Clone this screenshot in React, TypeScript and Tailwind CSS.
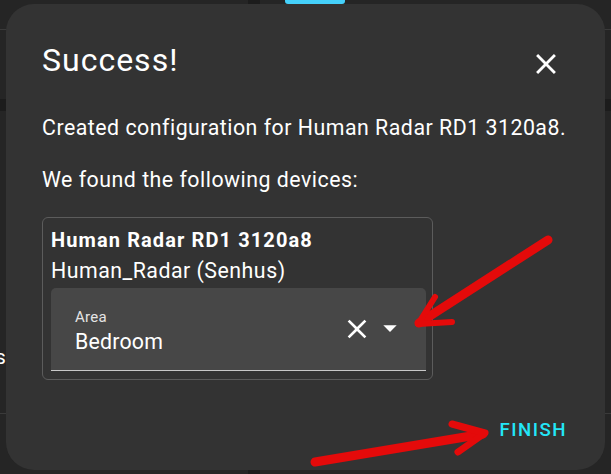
import React from "react";

function CloseIcon({ className }: { className?: string }) {
  return (
    <svg viewBox="0 0 24 24" className={className} fill="currentColor">
      <path d="M19,6.41L17.59,5L12,10.59L6.41,5L5,6.41L10.59,12L5,17.59L6.41,19L12,13.41L17.59,19L19,17.59L13.41,12L19,6.41Z" />
    </svg>
  );
}

function MenuDown({ className }: { className?: string }) {
  return (
    <svg viewBox="0 0 24 24" className={className} fill="currentColor">
      <path d="M7,10L12,15L17,10H7Z" />
    </svg>
  );
}

export default function App() {
  return (
    <div
      className="relative w-[611px] h-[474px] overflow-hidden bg-[#252525] text-white"
      style={{ fontFamily: "Roboto, 'Noto Sans', sans-serif" }}
    >
      {/* page behind the modal */}
      <div className="absolute left-0 right-0 top-[29px] h-px bg-[#3a3a3a]" />
      <div className="absolute left-0 right-0 top-[99px] h-[12px] bg-[#1c1c1c]" />
      <div className="absolute left-0 right-0 top-[413px] h-px bg-[#3a3a3a]" />
      <div className="absolute left-[248px] top-0 bottom-0 w-[12px] bg-[#1c1c1c]" />
      <div className="absolute left-[285px] top-0 w-[60px] h-[4px] rounded-b-[3px] bg-[#45d1fb]" />
      <span className="absolute left-[-5px] top-[343px] text-[21px] leading-[28px] text-white">s</span>

      {/* dialog */}
      <div className="relative ml-[6px] mt-[4px] w-[599px] h-[466px] rounded-[28px] bg-[#333333] flex flex-col pl-[36px] pt-[36px]">
        <div className="flex items-start justify-between pr-[42px]">
          <h2 className="text-[32px] leading-[40px] font-normal tracking-[1px] text-white">Success!</h2>
          <CloseIcon className="w-[34px] h-[34px] mt-[7px] text-white" />
        </div>

        <p className="mt-[33px] text-[21.33px] leading-[28px] tracking-[0.5px] text-white">
          Created configuration for Human Radar RD1 3120a8.
        </p>
        <p className="mt-[24px] text-[21.33px] leading-[28px] tracking-[0.5px] text-white">
          We found the following devices:
        </p>

        <div className="mt-[23px] w-[391px] h-[163px] rounded-[6px] border border-[#5c5c5c] flex flex-col pl-[8px] pr-[6px] pt-[10px]">
          <div className="text-[20px] leading-[24px] font-bold tracking-[1.1px] text-white">Human Radar RD1 3120a8</div>
          <div className="mt-[5px] text-[21.33px] leading-[28px] tracking-[0.5px] text-white">Human_Radar (Senhus)</div>
          <div className="mt-[3px] h-[83px] rounded-t-[5px] bg-[#474747] border-b border-[#c8c8c8] flex items-center pl-[24px] pr-[20px]">
            <div className="flex-1 flex flex-col pt-[4px]">
              <span className="text-[15px] leading-[18px] tracking-[0.3px] text-[#e4e4e4]">Area</span>
              <span className="mt-[3px] text-[21.33px] leading-[26px] tracking-[0.2px] text-white">Bedroom</span>
            </div>
            <CloseIcon className="w-[32px] h-[32px] text-white" />
            <MenuDown className="ml-[1px] w-[32px] h-[32px] -mt-[2px] text-white" />
          </div>
        </div>

        <div className="mt-auto flex justify-end pr-[38px] pb-[28px]">
          <span className="text-[18.67px] leading-[24px] font-medium tracking-[1.5px] text-[#23e6f8]">FINISH</span>
        </div>
      </div>

      {/* red annotation arrows */}
      <svg
        className="absolute inset-0 pointer-events-none"
        width="611"
        height="474"
        viewBox="0 0 611 474"
        fill="none"
        stroke="#e40a0a"
        strokeLinecap="round"
        strokeLinejoin="round"
      >
        <path d="M548 240 L419 323" strokeWidth="9" />
        <path d="M435 297 L418 324 L452 322" strokeWidth="6" />
        <path d="M315 462 L483 434" strokeWidth="9" />
        <path d="M452 424 L485 433 L458 452" strokeWidth="7" />
      </svg>
    </div>
  );
}
